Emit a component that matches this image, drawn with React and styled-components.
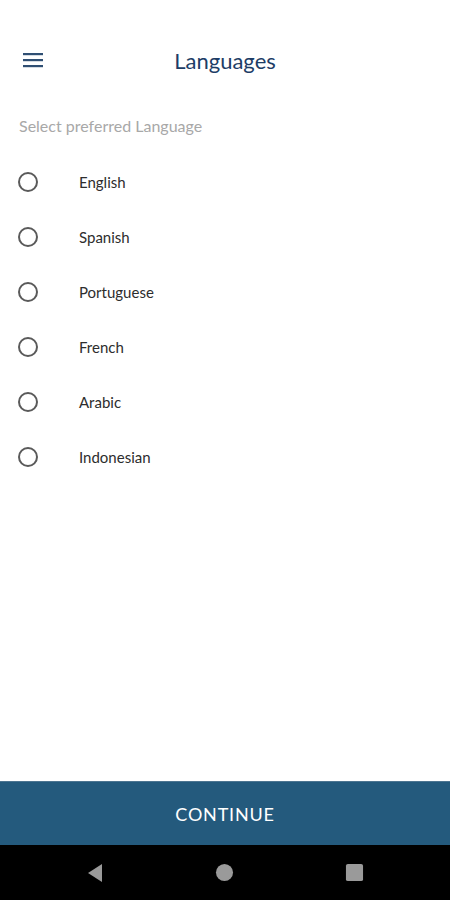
import React, { useState } from "react";
import styled, { createGlobalStyle } from "styled-components";

const GlobalStyle = createGlobalStyle`
  html, body {
    margin: 0;
    padding: 0;
    background: #ffffff;
  }
  body {
    font-family: Lato, "Open Sans", sans-serif;
  }
`;

const Screen = styled.div`
  width: 450px;
  height: 900px;
  display: flex;
  flex-direction: column;
  background: #ffffff;
  overflow: hidden;
`;

const StatusBar = styled.div`
  height: 36px;
  flex-shrink: 0;
`;

const Header = styled.header`
  height: 48px;
  display: flex;
  align-items: center;
  position: relative;
  padding: 0 0 0 21px;
`;

const MenuButton = styled.button`
  background: none;
  border: 0;
  padding: 0;
  width: 24px;
  height: 24px;
  display: flex;
  align-items: center;
  justify-content: center;
  cursor: pointer;
`;

const Title = styled.h1`
  position: absolute;
  left: 0;
  right: 0;
  text-align: center;
  margin: 0;
  font-size: 22px;
  font-weight: 400;
  color: #1d3d66;
  pointer-events: none;
`;

const Content = styled.main`
  flex: 1;
  padding: 0 0 0 18px;
`;

const Subtitle = styled.p`
  margin: 32px 0 19px 1px;
  font-size: 16px;
  color: #a8a8a8;
`;

const List = styled.div`
  display: flex;
  flex-direction: column;
`;

const Row = styled.label`
  height: 55px;
  display: flex;
  align-items: center;
  cursor: pointer;
`;

const Radio = styled.span`
  width: 20px;
  height: 20px;
  box-sizing: border-box;
  border-radius: 50%;
  border: 2px solid ${(p) => (p.checked ? "#245a7d" : "#5a5a5a")};
  display: flex;
  align-items: center;
  justify-content: center;
  margin-right: 41px;

  &::after {
    content: "";
    width: 10px;
    height: 10px;
    border-radius: 50%;
    background: #245a7d;
    display: ${(p) => (p.checked ? "block" : "none")};
  }
`;

const Label = styled.span`
  font-size: 15px;
  color: #2d2d2d;
`;

const ContinueBar = styled.button`
  height: 64px;
  flex-shrink: 0;
  border: 0;
  border-top: 1px solid #4d7591;
  background: #245a7d;
  color: #ffffff;
  font-family: Lato, "Open Sans", sans-serif;
  font-size: 18px;
  letter-spacing: 0.8px;
  cursor: pointer;
`;

const NavBar = styled.nav`
  height: 55px;
  flex-shrink: 0;
  background: #000000;
  display: flex;
  align-items: center;
  justify-content: space-between;
  padding: 0 86px 0 87px;
`;

const languages = ["English", "Spanish", "Portuguese", "French", "Arabic", "Indonesian"];

const App = () => {
  const [selected, setSelected] = useState(null);

  return (
    <>
      <GlobalStyle />
      <Screen>
        <StatusBar />
        <Header>
          <MenuButton>
            <svg width="22" height="16" viewBox="0 0 22 16">
              <rect x="1" y="1" width="20" height="2.2" fill="#2f4f73" />
              <rect x="1" y="7" width="20" height="2.2" fill="#2f4f73" />
              <rect x="1" y="13" width="20" height="2.2" fill="#2f4f73" />
            </svg>
          </MenuButton>
          <Title>Languages</Title>
        </Header>
        <Content>
          <Subtitle>Select preferred Language</Subtitle>
          <List>
            {languages.map((lang, i) => (
              <Row key={lang} onClick={() => setSelected(i)}>
                <Radio checked={selected === i} />
                <Label>{lang}</Label>
              </Row>
            ))}
          </List>
        </Content>
        <ContinueBar>CONTINUE</ContinueBar>
        <NavBar>
          <svg width="16" height="20" viewBox="0 0 16 20">
            <path d="M15 1 L15 19 L1 10 Z" fill="#9a9a9a" />
          </svg>
          <svg width="19" height="19" viewBox="0 0 20 20">
            <circle cx="10" cy="10" r="9" fill="#9a9a9a" />
          </svg>
          <svg width="19" height="19" viewBox="0 0 20 20">
            <rect x="1" y="1" width="18" height="18" rx="2" fill="#9a9a9a" />
          </svg>
        </NavBar>
      </Screen>
    </>
  );
};

export default App;
